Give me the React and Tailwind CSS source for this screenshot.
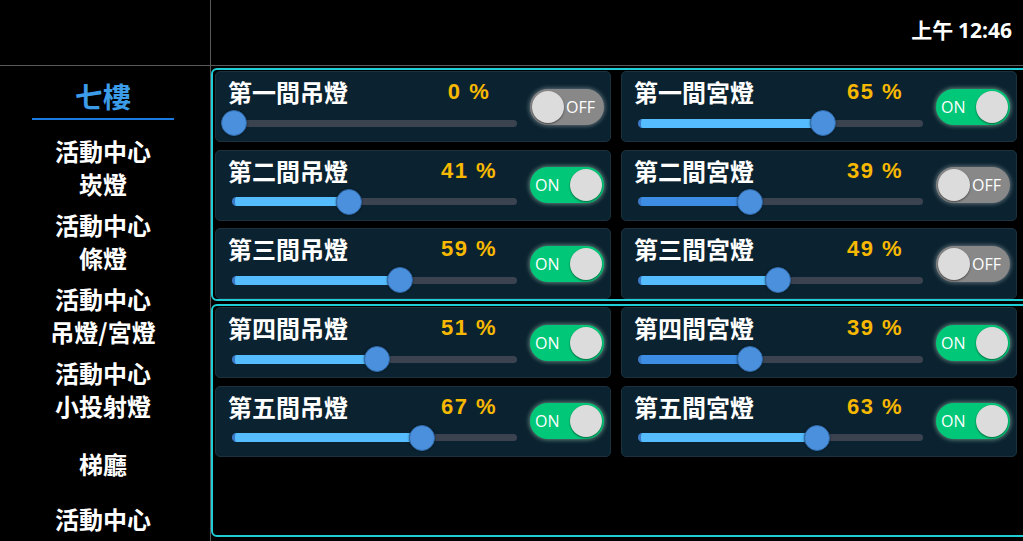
import React from "react";

const leftData = [
  { name: "第一間吊燈", pct: 0, on: false },
  { name: "第二間吊燈", pct: 41, on: true },
  { name: "第三間吊燈", pct: 59, on: true },
  { name: "第四間吊燈", pct: 51, on: true },
  { name: "第五間吊燈", pct: 67, on: true },
];
const rightData = [
  { name: "第一間宮燈", pct: 65, on: true },
  { name: "第二間宮燈", pct: 39, on: false, dark: true },
  { name: "第三間宮燈", pct: 49, on: false },
  { name: "第四間宮燈", pct: 39, on: true, dark: true },
  { name: "第五間宮燈", pct: 63, on: true },
];

const CJK = "font-['Noto_Sans_CJK_TC','Noto_Sans_CJK_SC',sans-serif]";

function Toggle({ on }) {
  if (on) {
    return (
      <div className="w-[74px] h-[36px] rounded-full bg-[#00c878] flex items-center justify-between pl-[5px] pr-[2px] shadow-[0_0_4px_1px_rgba(200,255,220,0.45)]">
        <span className="font-['Open_Sans',sans-serif] text-[16px] text-white leading-none">ON</span>
        <div className="w-[32px] h-[32px] rounded-full bg-[#dcdcdc] shadow-[0_1px_2px_rgba(0,0,0,0.5)]" />
      </div>
    );
  }
  return (
    <div className="w-[74px] h-[36px] rounded-full bg-[#888888] flex items-center justify-between pl-[2px] pr-[9px] shadow-[0_0_4px_1px_rgba(255,255,255,0.35)]">
      <div className="w-[32px] h-[32px] rounded-full bg-[#dcdcdc] shadow-[0_1px_2px_rgba(0,0,0,0.5)]" />
      <span className="font-['Open_Sans',sans-serif] text-[16px] text-white leading-none">OFF</span>
    </div>
  );
}

function Slider({ pct, dark }) {
  const center = 2 + (pct / 100) * 281;
  return (
    <div className="relative w-[285px] h-[7px] rounded-full bg-[#3b4351] ml-[4px]">
      <div
        className={`absolute left-0 top-[-1px] h-[9px] rounded-l-full border-l-[3px] border-[#3a78c8] ${dark ? "bg-[#3d8de4]" : "bg-[#55bdfd]"}`}
        style={{ width: `${center}px` }}
      />
      <div
        className="absolute top-1/2 w-[26px] h-[26px] -translate-x-1/2 -translate-y-1/2 rounded-full bg-[#4a90dc] border border-[#2f68a8] shadow-[0_0_2px_rgba(0,0,0,0.6)]"
        style={{ left: `${center}px` }}
      />
    </div>
  );
}

function Card({ item }) {
  return (
    <div className="h-[71px] w-[396px] rounded-[5px] bg-[#0b2330] border border-[#1b323e] flex pl-[12px] pr-[6px]">
      <div className="flex flex-col w-[303px] pt-[7px]">
        <div className="flex items-center h-[26px]">
          <div className={`w-[180px] ${CJK} font-bold text-[24px] text-white leading-none`}>{item.name}</div>
          <div className="w-[122px] text-center font-['Liberation_Sans',sans-serif] font-bold text-[22px] tracking-[1.5px] text-[#f7b900] leading-none">
            {item.pct} %
          </div>
        </div>
        <div className="h-[14px] flex items-center mt-[11px]">
          <Slider pct={item.pct} dark={item.dark} />
        </div>
      </div>
      <div className="ml-auto flex items-center">
        <Toggle on={item.on} />
      </div>
    </div>
  );
}

function Group({ rows }) {
  return (
    <div className="w-[818px] h-[233px] border-2 border-[#1fcdd6] rounded-[6px] px-[2px] pt-[1px] grid grid-cols-[396px_396px] gap-x-[10px] gap-y-[7.5px] content-start">
      {rows.map(([l, r], i) => (
        <React.Fragment key={i}>
          <Card item={l} />
          <Card item={r} />
        </React.Fragment>
      ))}
    </div>
  );
}

export default function App() {
  const rows = leftData.map((l, i) => [l, rightData[i]]);
  const sideItems = [
    ["活動中心", "崁燈"],
    ["活動中心", "條燈"],
    ["活動中心", "吊燈/宮燈"],
    ["活動中心", "小投射燈"],
    ["梯廳"],
    ["活動中心", ""],
  ];
  return (
    <div className="w-[1023px] h-[541px] bg-black overflow-hidden flex flex-col">
      <div className="h-[66px] flex border-b border-[#5a5a5a] shrink-0">
        <div className="w-[211px] border-r border-[#5a5a5a]" />
        <div className="flex-1 flex items-center justify-end pr-[11px] pb-[5px]">
          <span className={`${CJK} font-bold text-[21px] text-white`}>
            上午 <span className="font-['Open_Sans',sans-serif]">12:46</span>
          </span>
        </div>
      </div>
      <div className="flex flex-1 min-h-0">
        <div className="w-[211px] shrink-0 border-r border-[#5a5a5a] pr-[4px] flex flex-col items-center overflow-hidden">
          <div className="w-[142px] flex flex-col items-center border-b-2 border-[#1a7ae2] mt-[12px] pb-[4px]">
            <div className={`${CJK} font-bold text-[28px] text-[#3d9cea] leading-[36px]`}>七樓</div>
          </div>
          <div className="flex flex-col gap-[8px] mt-[14px]">
            {sideItems.map((it, i) => (
              <div key={i} className={`h-[66px] flex flex-col items-center ${i === 5 ? "justify-start -mt-[2px]" : "justify-center"} ${CJK} font-bold text-[24px] text-white leading-[33px]`}>
                {it.map((t, j) => (
                  <div key={j}>{t}</div>
                ))}
              </div>
            ))}
          </div>
        </div>
        <div className="flex-1 flex flex-col gap-[3px] pt-[2px] overflow-hidden">
          <Group rows={rows.slice(0, 3)} />
          <Group rows={rows.slice(3)} />
        </div>
      </div>
    </div>
  );
}
